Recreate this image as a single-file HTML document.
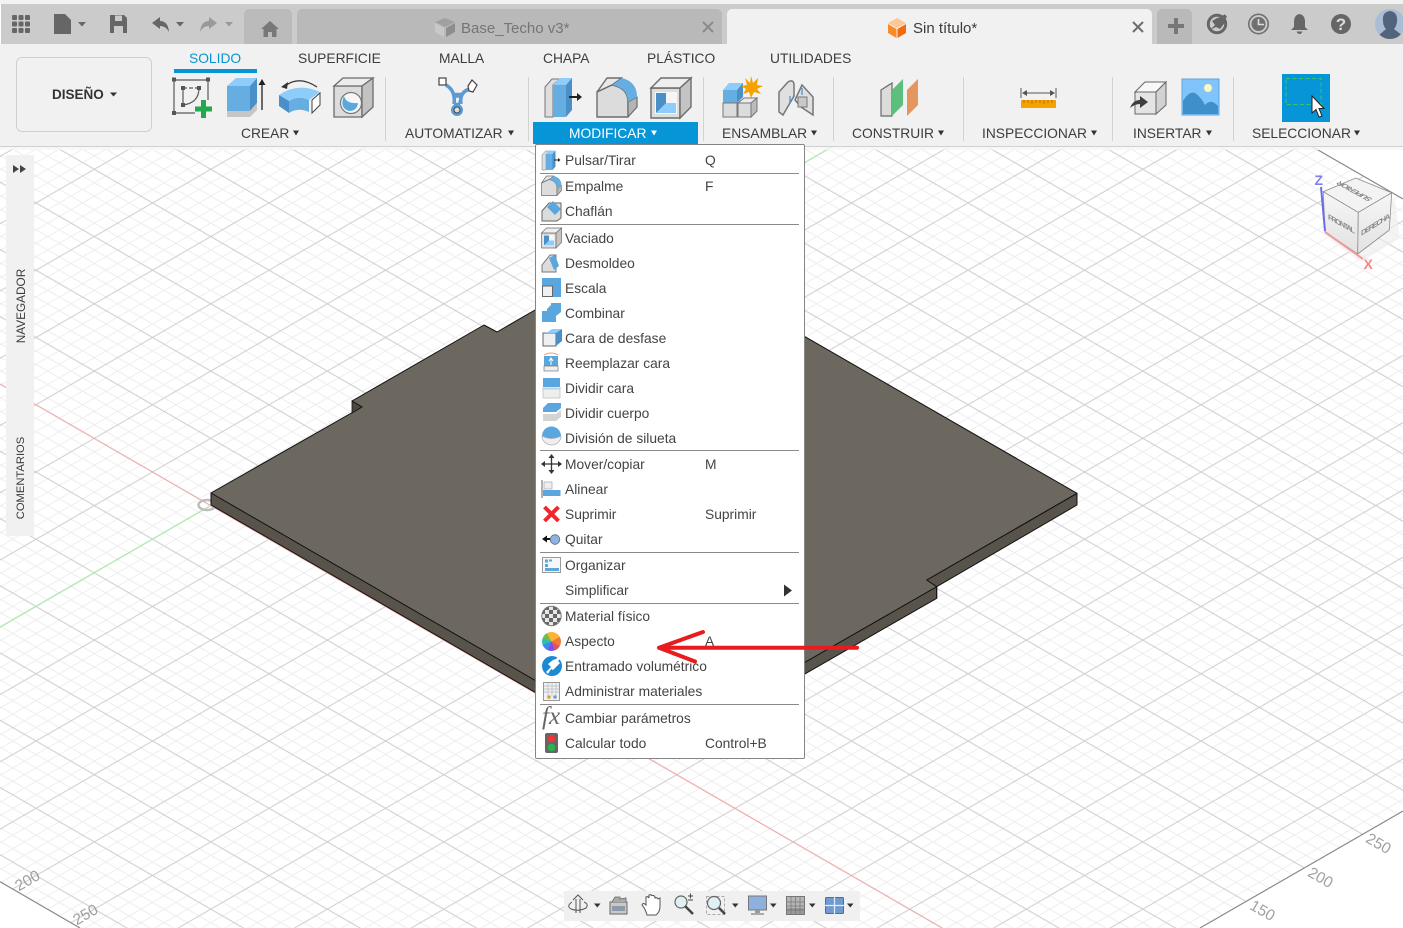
<!DOCTYPE html>
<html><head><meta charset="utf-8"><title>Fusion</title>
<style>
html,body{margin:0;padding:0;background:#fff;width:1403px;height:928px;overflow:hidden}
body{position:relative;font-family:"Liberation Sans",sans-serif;font-size:13.8px;color:#3c3c3c}
.a{position:absolute}
.t{position:absolute;white-space:nowrap;line-height:22px;height:20px}
svg.full{position:absolute;left:0;top:0;width:1403px;height:928px}
.m{position:absolute;left:565px;white-space:nowrap;line-height:22px;height:20px;color:#444}
.k{position:absolute;left:705px;white-space:nowrap;line-height:22px;height:20px;color:#444}
.s{position:absolute;left:540px;width:259px;height:1px;background:#8a8a8a}
.sep{position:absolute;top:77px;width:1px;height:64px;background:#d2d2d2}
</style></head><body>

<svg class="full" viewBox="0 0 1403 928">
<defs>
<pattern id="g" patternUnits="userSpaceOnUse" width="100" height="100" patternTransform="matrix(.5825,.3363,.5825,-.3363,94.3,169.3)">
<g stroke="#eeeeee" stroke-width="1.7" fill="none">
<path d="M20 0V100M40 0V100M60 0V100M80 0V100M0 20H100M0 40H100M0 60H100M0 80H100"/></g>
<path d="M0 0H100M0 100H100M0 0V100M100 0V100" stroke="#cfcfcf" stroke-width="1.8" fill="none"/>
</pattern>
<linearGradient id="cf" x1="0" y1="0" x2="0" y2="1"><stop offset="0" stop-color="#f6f6f6"/><stop offset="1" stop-color="#e2e2e2"/></linearGradient>
</defs>
<rect width="1403" height="928" fill="#fff"/>
<polygon points="0,0 1058,0 1403,199 1403,811 1200,928 80,928 0,881.7" fill="url(#g)"/>
<path d="M0 881.7L80 928M1200 928L1403 811M1403 199L1058 0" fill="none" stroke="#8a8a8a" stroke-width="1.2"/>
<g font-size="15.5" fill="#a0a0a0" text-anchor="middle">
<text transform="translate(1376,848) rotate(30)">250</text>
<text transform="translate(1318,882) rotate(30)">200</text>
<text transform="translate(1260,915) rotate(30)">150</text>
<text transform="translate(30,885) rotate(-30)">200</text>
<text transform="translate(88,919) rotate(-30)">250</text>
</g>
<path d="M0 384L942 928" stroke="#f6a8a8" stroke-width="1" fill="none"/>
<path d="M0 627L1086 0" stroke="#a4f0a4" stroke-width="1" fill="none"/>
<ellipse cx="207" cy="505" rx="8.5" ry="5" fill="none" stroke="#bdbdbd" stroke-width="2.5"/>
<!-- plate -->
<polygon points="211,493 211,505 640,753 700,734 806,673.3 936.7,598.3 936.7,586.7 1077,505 1077,493.3 926.7,580" fill="#58544b" stroke="#111" stroke-width="1" stroke-linejoin="round"/>
<polygon points="211,493 362,407 352,401 484,325 497,332 535,310 650,300 805,336.7 1077,493.3 926.7,580 936.7,586.7 806,661.7 700,722 640,741" fill="#6c685f" stroke="#111" stroke-width="1" stroke-linejoin="round"/>
<polygon points="352,401 362,407 352,413" fill="#4c483f" stroke="#111" stroke-width=".8"/>
<path d="M936.7 586.7V598.3M1077 493.3V505" stroke="#111" stroke-width="1"/>
<!-- view cube -->
<polygon points="1330,240 1361,262 1400,238 1395,200" fill="#ededed" opacity=".6"/>
<polygon points="1323.3,191.7 1358.3,212.3 1357.7,254 1325,231.7" fill="url(#cf)" stroke="#8d8d8d" stroke-width=".8"/>
<polygon points="1358.3,212.3 1391.7,192.7 1389.3,230 1357.7,254" fill="url(#cf)" stroke="#8d8d8d" stroke-width=".8"/>
<polygon points="1355.7,178 1391.7,192.7 1358.3,212.3 1323.3,191.7" fill="#f3f3f3" stroke="#8d8d8d" stroke-width=".8"/>
<g font-size="7.5" fill="#8c8c8c" font-weight="bold">
<text transform="matrix(1,.55,0,1,1328,219)" textLength="27">FRONTAL</text>
<text transform="matrix(1,-.62,0,1,1361,236)" textLength="29">DERECHA</text>
<text transform="matrix(-1,-.55,.9,-.5,1373,199)" textLength="33">SUPERIOR</text>
</g>
<path d="M1321 187L1325 231" stroke="#6b6bee" stroke-width="2" fill="none"/>
<path d="M1325 232L1363 259" stroke="#f29a9a" stroke-width="2" fill="none"/>
<text x="1314.5" y="185" font-size="14" font-weight="bold" fill="#8080f0">Z</text>
<text x="1363.5" y="269" font-size="14" font-weight="bold" fill="#f08888">X</text>
</svg>

<!-- left panel -->
<div class="a" style="left:6px;top:155px;width:28px;height:381px;background:#f1f1f1"></div>
<div class="t" style="left:21px;top:296px;font-size:11.8px;line-height:20px;transform:translate(-50%,0) rotate(-90deg);color:#3c3c3c">NAVEGADOR</div>
<div class="t" style="left:21px;top:468px;font-size:11.2px;line-height:20px;transform:translate(-50%,0) rotate(-90deg);color:#3c3c3c">COMENTARIOS</div>

<!-- bottom toolbar -->
<div class="a" style="left:564px;top:891px;width:296px;height:30px;background:#f0f0f0"></div>

<!-- top bars -->
<div class="a" style="left:0;top:0;width:1403px;height:4px;background:#f2f2f2"></div>
<div class="a" style="left:1px;top:4px;width:1402px;height:40px;background:#cbcbcb"></div>
<div class="a" style="left:0;top:4px;width:1px;height:40px;background:#fff"></div>
<div class="a" style="left:244px;top:9px;width:48px;height:35px;background:#bbb;border-radius:5px 5px 0 0"></div>
<div class="a" style="left:297px;top:9px;width:425px;height:35px;background:#b9b9b9;border-radius:5px 5px 0 0"></div>
<div class="a" style="left:727px;top:9px;width:425px;height:35px;background:#f1f1f1;border-radius:5px 5px 0 0"></div>
<div class="a" style="left:1157px;top:9px;width:35px;height:35px;background:#b9b9b9;border-radius:5px 5px 0 0"></div>
<div class="a" style="left:0;top:44px;width:1403px;height:102px;background:#f1f1f1"></div>
<div class="a" style="left:0;top:146px;width:1403px;height:1px;background:#d0d0d0"></div>
<div class="a" style="left:0;top:147px;width:1403px;height:3px;background:#f6f6f6;opacity:.8"></div>
<div class="t" style="left:461px;top:18px;font-size:15px;color:#757575">Base_Techo v3*</div>
<div class="t" style="left:913px;top:18px;font-size:15px;color:#3c3c3c">Sin título*</div>

<!-- design box -->
<div class="a" style="left:16px;top:57px;width:134px;height:73px;border:1.5px solid #d0d0d0;border-radius:6px"></div>
<div class="t" style="left:52px;top:84px;font-size:13.5px;font-weight:bold;color:#333">DISEÑO</div>

<!-- tabs -->
<div class="t" style="left:189px;top:48px;color:#0696d7">SOLIDO</div>
<div class="a" style="left:174px;top:69px;width:83px;height:4px;background:#0696d7"></div>
<div class="t" style="left:298px;top:48px">SUPERFICIE</div>
<div class="t" style="left:439px;top:48px">MALLA</div>
<div class="t" style="left:543px;top:48px">CHAPA</div>
<div class="t" style="left:647px;top:48px">PLÁSTICO</div>
<div class="t" style="left:770px;top:48px">UTILIDADES</div>

<!-- separators -->
<div class="sep" style="left:385px"></div><div class="sep" style="left:528px"></div><div class="sep" style="left:703px"></div><div class="sep" style="left:833px"></div><div class="sep" style="left:963px"></div><div class="sep" style="left:1112px"></div><div class="sep" style="left:1233px"></div>

<!-- ribbon labels -->
<div class="a" style="left:533px;top:122px;width:165px;height:22px;background:#0696d7"></div>
<div class="t" style="left:241px;top:123px">CREAR</div>
<div class="t" style="left:405px;top:123px">AUTOMATIZAR</div>
<div class="t" style="left:569px;top:123px;color:#fff">MODIFICAR</div>
<div class="t" style="left:722px;top:123px">ENSAMBLAR</div>
<div class="t" style="left:852px;top:123px">CONSTRUIR</div>
<div class="t" style="left:982px;top:123px">INSPECCIONAR</div>
<div class="t" style="left:1133px;top:123px">INSERTAR</div>
<div class="t" style="left:1252px;top:123px">SELECCIONAR</div>

<!-- menu -->
<div class="a" style="left:535px;top:144px;width:268px;height:613px;background:#fff;border:1px solid #858585;border-radius:2px"></div>
<div class="s" style="top:173px"></div><div class="s" style="top:224px"></div><div class="s" style="top:450px"></div><div class="s" style="top:552px"></div><div class="s" style="top:603px"></div><div class="s" style="top:704px"></div>
<div class="m" style="top:150px">Pulsar/Tirar</div><div class="k" style="top:150px">Q</div>
<div class="m" style="top:176px">Empalme</div><div class="k" style="top:176px">F</div>
<div class="m" style="top:201px">Chaflán</div>
<div class="m" style="top:228px">Vaciado</div>
<div class="m" style="top:253px">Desmoldeo</div>
<div class="m" style="top:278px">Escala</div>
<div class="m" style="top:303px">Combinar</div>
<div class="m" style="top:328px">Cara de desfase</div>
<div class="m" style="top:353px">Reemplazar cara</div>
<div class="m" style="top:378px">Dividir cara</div>
<div class="m" style="top:403px">Dividir cuerpo</div>
<div class="m" style="top:428px">División de silueta</div>
<div class="m" style="top:454px">Mover/copiar</div><div class="k" style="top:454px">M</div>
<div class="m" style="top:479px">Alinear</div>
<div class="m" style="top:504px">Suprimir</div><div class="k" style="top:504px">Suprimir</div>
<div class="m" style="top:529px">Quitar</div>
<div class="m" style="top:555px">Organizar</div>
<div class="m" style="top:580px">Simplificar</div>
<div class="m" style="top:606px">Material físico</div>
<div class="m" style="top:631px">Aspecto</div><div class="k" style="top:631px">A</div>
<div class="m" style="top:656px">Entramado volumétrico</div>
<div class="m" style="top:681px">Administrar materiales</div>
<div class="m" style="top:708px">Cambiar parámetros</div>
<div class="m" style="top:733px">Calcular todo</div><div class="k" style="top:733px">Control+B</div>
<div class="a" style="left:542px;top:632px;width:19px;height:19px;border-radius:50%;background:conic-gradient(#ffb233 0 60deg,#ee7a3e 60deg 120deg,#dd5560 120deg 160deg,#7a4ff0 160deg 205deg,#3a8ee6 205deg 250deg,#2cc0b0 250deg 290deg,#6cc04a 290deg 330deg,#ffb233 330deg)"></div>

<svg class="full" viewBox="0 0 1403 928">
<defs>
<g id="pp">
<polygon points="545,87 552,79 560,79 553,85 553,117 545,117" fill="#dedede" stroke="#777"/>
<polygon points="553,85 566,85 566,117 553,117" fill="#66ade2"/>
<polygon points="553,85 560,78 572,78 566,85" fill="#8ecdfb"/>
<polygon points="566,85 572,78 572,110 566,117" fill="#4a8fc7"/>
<path d="M569 97H578" stroke="#222" stroke-width="2"/><path d="M577 93L582 97L577 101Z" fill="#222"/>
</g>
<g id="fl">
<path d="M597 92L607 78H622L612 85Z" fill="#e8e8e8" stroke="#6c6c6c" stroke-width="1.4" stroke-linejoin="round"/>
<path d="M597 92L612 85Q628 88 628 102V117H597Z" fill="#dcdcdc" stroke="#6c6c6c" stroke-width="1.4" stroke-linejoin="round"/>
<path d="M628 102L637 97V107L628 117Z" fill="#b5b5b5" stroke="#6c6c6c" stroke-width="1.2" stroke-linejoin="round"/>
<path d="M612 85L622 78Q637 82 637 97L628 102Q628 88 612 85Z" fill="#66ade2"/>
</g>
<g id="sh">
<polygon points="651,88 680,88 680,118 651,118" fill="#dedede" stroke="#6c6c6c" stroke-width="1.4"/>
<polygon points="651,88 661,78 691,78 680,88" fill="#eeeeee" stroke="#6c6c6c" stroke-width="1.4"/>
<polygon points="680,88 691,78 691,107 680,118" fill="#c4c4c4" stroke="#6c6c6c" stroke-width="1.4"/>
<rect x="655" y="92" width="22" height="22" fill="#f6f6f6"/>
<polygon points="656,93 666,93 666,105 656,113" fill="#4a8fc7"/>
<polygon points="666,103 676,103 676,113 656,113" fill="#8ecdfb"/>
</g>
</defs>

<!-- top bar icons -->
<g fill="#666">
<rect x="12" y="15" width="5" height="5" rx="1"/><rect x="18.5" y="15" width="5" height="5" rx="1"/><rect x="25" y="15" width="5" height="5" rx="1"/>
<rect x="12" y="21.5" width="5" height="5" rx="1"/><rect x="18.5" y="21.5" width="5" height="5" rx="1"/><rect x="25" y="21.5" width="5" height="5" rx="1"/>
<rect x="12" y="28" width="5" height="5" rx="1"/><rect x="18.5" y="28" width="5" height="5" rx="1"/><rect x="25" y="28" width="5" height="5" rx="1"/>
<path d="M54 14H65L71 20V34H54Z"/>
<path d="M78 22H86L82 26.5ZM176 22H184L180 26.5Z"/>
<path fill-rule="evenodd" d="M110 15H124L127 18V33H110ZM115 15.5V21H122V15.5ZM114 26V33H123V26Z"/>
<path d="M152 23L160 17V21Q168 21 169 32Q166 26 160 26V29Z"/>
</g>
<path d="M217 23L209 17V21Q201 21 200 32Q203 26 209 26V29Z" fill="#999"/>
<path d="M225 22H233L229 26.5Z" fill="#999"/>
<path d="M270 21L279 29H276.5V37H272V32H268V37H263.5V29H261Z" fill="#787878"/>
<polygon points="435,22 445,18 455,22 445,27" fill="#a0a0a0"/><polygon points="435,23 444,28 444,37 435,32" fill="#c8c8c8"/><polygon points="446,28 455,23 455,32 446,37" fill="#8e8e8e"/>
<path d="M703 22L713 32M713 22L703 32" stroke="#8a8a8a" stroke-width="2"/>
<path d="M1133 22L1143 32M1143 22L1133 32" stroke="#6d6d6d" stroke-width="2"/>
<polygon points="888,23 897,18 906,23 897,28" fill="#ffc792"/><polygon points="888,24 896.5,29 896.5,38 888,33" fill="#f98a25"/><polygon points="897.5,29 906,24 906,33 897.5,38" fill="#f26b0f"/>
<path d="M1176 18V34M1168 26H1184" stroke="#777" stroke-width="4"/>
<circle cx="1217" cy="24" r="8.7" fill="none" stroke="#666" stroke-width="3"/>
<path d="M1210 30L1215 25L1212 21L1217 18L1221 17L1225 14L1227 17L1224 20L1226 22L1223 25L1220 29L1216 27Z" fill="#666"/>
<path d="M1222 12L1229 18L1231 12Z" fill="#cbcbcb"/>
<circle cx="1258.5" cy="24" r="9.7" fill="none" stroke="#707070" stroke-width="1.6"/><circle cx="1258.5" cy="24" r="7" fill="#707070"/>
<path d="M1258.5 19V24.5H1264" stroke="#ddd" stroke-width="1.6" fill="none"/>
<path d="M1299.5 14Q1305 15 1305 22V27L1308 30H1291L1294 27V22Q1294 15 1299.5 14ZM1296.5 31.500H1302.500Q1301.500 34 1299.500 34Q1297.500 34 1296.500 31.500Z" fill="#666"/>
<circle cx="1341" cy="24" r="10" fill="#666"/>
<text x="1341" y="30" text-anchor="middle" font-size="17" font-weight="bold" fill="#ddd">?</text>
<clipPath id="av"><circle cx="1390" cy="24" r="15"/></clipPath>
<g clip-path="url(#av)"><rect x="1375" y="9" width="28" height="30" fill="#a9bdd6"/>
<path d="M1390 11Q1398 12 1397 22Q1396 27 1394 29L1403 36V39H1378V36L1386 29Q1383 26 1383 21Q1382 12 1390 11Z" fill="#52647c"/></g>

<!-- ribbon carets -->
<g fill="#333">
<path d="M110 92.500H117L113.500 96.500ZM293 130.500H299L296 135.500ZM508 130.500H514L511 135.500ZM811 130.500H817L814 135.500ZM938 130.500H944L941 135.500ZM1091 130.500H1097L1094 135.500ZM1206 130.500H1212L1209 135.500ZM1354 130.500H1360L1357 135.500Z"/>
</g>
<path d="M651 130.500H657L654 135.500Z" fill="#fff"/>

<!-- create sketch -->
<g fill="none" stroke="#5a5a5a" stroke-width="1.2"><path d="M174 80H208M174 80V113H195M208 79V100"/><path d="M183 88H199" stroke-dasharray="4 2"/><path d="M183 88V105M183 105Q199 103 199 88"/></g>
<g fill="#555"><rect x="172" y="77.500" width="4" height="4"/><rect x="206" y="77.500" width="4" height="4"/><rect x="172" y="111" width="4" height="4"/><rect x="181" y="86" width="4" height="4"/><rect x="197" y="86" width="4" height="4"/><rect x="181" y="103" width="4" height="4"/></g>
<path d="M203.500 100V118M195 109H212" stroke="#22a84f" stroke-width="5"/>
<!-- extrude -->
<polygon points="227,86 250,86 250,111 227,111" fill="#66ade2"/><polygon points="227,86 236,78 257,78 250,86" fill="#8ecdfb"/><polygon points="250,86 257,78 257,103 250,111" fill="#4a8fc7"/>
<polygon points="227,111 250,111 257,103 257,110 250,117 227,117" fill="#c6c6c6"/>
<path d="M262 110V83" stroke="#222" stroke-width="1.3"/><path d="M258.500 85L262 79L265.500 85Z" fill="#222"/>
<!-- revolve -->
<path d="M317 87Q299 75 285 86" fill="none" stroke="#333" stroke-width="1.3"/><path d="M281 87L288 82L287 89Z" fill="#333"/>
<path d="M279 95Q298 82 320 92L309 100Q298 95 289 101Z" fill="#8ecdfb"/>
<path d="M279 95L289 101V113L279 106Z" fill="#4a8fc7"/>
<path d="M289 101Q298 95 309 100V112Q298 107 289 113Z" fill="#66ade2"/>
<polygon points="312,100 320,93 320,105 312,113" fill="#fff" stroke="#444" stroke-width="1"/>
<!-- hole -->
<polygon points="334,86 362,86 362,117 334,117" fill="#dcdcdc" stroke="#6c6c6c" stroke-width="1.3"/><polygon points="334,86 343,78 373,78 362,86" fill="#ececec" stroke="#6c6c6c" stroke-width="1.3"/><polygon points="362,86 373,78 373,107 362,117" fill="#c2c2c2" stroke="#6c6c6c" stroke-width="1.3"/>
<circle cx="351" cy="103" r="10.500" fill="#f6f6f6" stroke="#777" stroke-width="1.2"/>
<path d="M344 96Q346 104 358 103Q357 111 349 111Q339 108 344 96Z" fill="#5aa6de"/>
<!-- automate -->
<path d="M446 85Q456 91 454 104M470 89Q459 92 461 104M455 96H460" stroke="#5b9bd3" stroke-width="3.5" fill="none"/>
<path d="M453 94L462 94L459 104H455Z" fill="none" stroke="#5b9bd3" stroke-width="2.5"/>
<rect x="439" y="78" width="7" height="7" fill="#fff" stroke="#444" stroke-width="1.2"/>
<polygon points="468,86 472,80 477,85 473,92 469,91" fill="#fff" stroke="#444" stroke-width="1.2"/>
<circle cx="457" cy="110" r="6" fill="#5b9bd3"/><circle cx="457" cy="110" r="3" fill="#ddd" stroke="#444"/>
<!-- modify -->
<use href="#pp"/><use href="#fl"/><use href="#sh"/>
<!-- assemble -->
<polygon points="723,90 737,90 737,103 723,103" fill="#66ade2"/><polygon points="723,90 729,83 743,83 737,90" fill="#8ecdfb"/><polygon points="737,90 743,83 743,97 737,103" fill="#4a8fc7"/>
<rect x="723" y="103" width="14" height="14" fill="#dcdcdc" stroke="#777"/><polygon points="738,103 751,103 751,117 738,117" fill="#dcdcdc" stroke="#777"/><polygon points="738,103 744,98 757,98 751,103" fill="#ececec" stroke="#777"/><polygon points="751,103 757,98 757,111 751,117" fill="#bbb" stroke="#777"/>
<polygon points="751,76 753,83 758,78 757,85 763,86 757,89 761,94 754,92 751,98 749,92 743,94 746,89 741,86 747,85 745,78 750,83" fill="#f5a100"/>
<!-- joint -->
<path d="M779 112V92L788 82Q793 79 794 84V96L783 115Z" fill="#e0e0e0" stroke="#777" stroke-width="1.5"/>
<path d="M795 100L802 85L813 97V115L801 107Z" fill="#e0e0e0" stroke="#777" stroke-width="1.5"/>
<rect x="798" y="97" width="9" height="10" fill="#c9c9c9" stroke="#777"/>
<path d="M790 96V103M802 88V95" stroke="#3a90d8" stroke-width="1.2"/>
<!-- construct -->
<polygon points="881,90 892,83 892,116 881,116" fill="#dcdcdc" stroke="#6a6a6a" stroke-width="1.2"/>
<polygon points="892,90 903,79 903,105 892,116" fill="#5cbf7d"/>
<polygon points="907,90 918,79 918,105 907,116" fill="#e3965e"/>
<!-- inspect -->
<path d="M1021 88V98M1056 88V98" stroke="#555" stroke-width="1"/><path d="M1024 93H1053" stroke="#555" stroke-width="1"/><path d="M1022 93L1027 90V96ZM1055 93L1050 90V96Z" fill="#555"/>
<rect x="1021" y="100" width="35" height="8" fill="#f5a100"/>
<path d="M1024 100V103M1028 100V103M1032 100V104M1036 100V103M1040 100V103M1044 100V104M1048 100V103M1052 100V103" stroke="#a06b00" stroke-width=".8"/>
<!-- insert -->
<polygon points="1135,92 1156,92 1156,114 1135,114" fill="#e4e4e4" stroke="#666"/><polygon points="1135,92 1145,82 1166,82 1156,92" fill="#f8f8f8" stroke="#666"/><polygon points="1156,92 1166,82 1166,105 1156,114" fill="#d2d2d2" stroke="#666"/>
<path d="M1130 108Q1133 100 1140 100V96L1148 102L1140 108V104Q1135 104 1130 108Z" fill="#3e3e3e"/>
<rect x="1182" y="79" width="37" height="36" fill="#80c4fb" stroke="#5da6e0"/>
<path d="M1183 114V101Q1189 91 1195 93Q1201 97 1205 105Q1211 98 1218 106V114Z" fill="#3f8fcb"/><circle cx="1208" cy="88" r="4" fill="#fdf6c0"/>
<!-- select -->
<rect x="1282" y="74" width="48" height="48" fill="#0696d7"/>
<rect x="1286" y="78.500" width="35" height="26" fill="none" stroke="#38c56e" stroke-width="1" stroke-dasharray="4 2.500"/>
<path d="M1312 96V113L1316 109.500L1319 117L1322 116L1319 108.500H1324Z" fill="#fff" stroke="#222" stroke-width="1"/>

<!-- menu icons -->
<use href="#pp" transform="translate(269.500,111.500) scale(.5)"/>
<use href="#fl" transform="translate(243,137) scale(.5)"/>
<polygon points="542,211 549,203 561,203 561,218 557,221 542,221" fill="#dcdcdc" stroke="#666"/><polygon points="547,207 553,201 561,209 555,215" fill="#5aa6de"/>
<use href="#sh" transform="translate(216,189) scale(.5)"/>
<polygon points="542,265 550,255 556,255 556,272 542,272" fill="#dcdcdc" stroke="#777"/><polygon points="549,258 555,255 559,266 554,270" fill="#5aa6de"/>
<rect x="542" y="278" width="19" height="19" fill="#5aa6de"/><rect x="542.500" y="286" width="10" height="10.500" fill="#f0f0f0" stroke="#666"/>
<path d="M547 309L551 305V303H561V312L556 316V322H542V311H547Z" fill="#5aa6de"/>
<rect x="543" y="333" width="13" height="13" fill="#f0f0f0" stroke="#666"/><polygon points="546,333 552,329 562,329 556,333" fill="#8ecdfb"/><polygon points="556,333 562,329 562,341 556,346" fill="#4a8fc7"/>
<path d="M544 355Q551 351 558 355" stroke="#f0a070" fill="none"/><rect x="544" y="356" width="14" height="10" fill="#5aa6de"/><rect x="544" y="366" width="14" height="5" fill="#eee" stroke="#777" stroke-width=".7"/><path d="M551 365V359M549 361L551 358L553 361" stroke="#fff" fill="none"/>
<rect x="543" y="378" width="17" height="9" fill="#5aa6de"/><rect x="543" y="389" width="17" height="9" fill="#eee" stroke="#bbb" stroke-width=".7"/><path d="M542 388H561" stroke="#a8d4f5"/>
<polygon points="543,408 548,403 561,403 561,408 556,412 543,412" fill="#5aa6de"/><path d="M542 413H556L561 409" stroke="#fff" fill="none"/><polygon points="543,414 556,414 561,410 561,417 556,421 543,421" fill="#d4d4d4"/>
<path d="M542 436A9.500 9.500 0 0 1 561 436Q551.500 441 542 436Z" fill="#5aa6de"/><path d="M542 436Q551.500 441 561 436A9.500 9 0 0 1 542 436Z" fill="#eee" stroke="#aaa" stroke-width=".7"/>
<path d="M551.500 456V472M543 464H560" stroke="#333" stroke-width="1.3"/><path d="M551.500 454L548.500 458H554.500ZM551.500 474L548.500 470H554.500ZM541 464L545 461V467ZM562 464L558 461V467Z" fill="#333"/>
<path d="M542 480V498" stroke="#666"/><rect x="544" y="482" width="8" height="7" fill="#eee" stroke="#aaa" stroke-width=".7"/><rect x="543" y="490" width="17.500" height="6" fill="#5aa6de"/>
<path d="M544.500 507L558.500 521M558.500 507L544.500 521" stroke="#f0262c" stroke-width="4"/>
<path d="M542 539L547 535.500V542.500Z" fill="#111"/><path d="M546 539H551" stroke="#111" stroke-width="2"/><circle cx="555" cy="539.500" r="4.800" fill="#8fb3e0" stroke="#667" stroke-width=".8"/>
<rect x="542.500" y="557.500" width="18" height="15" fill="#f4f8fb" stroke="#9a9a9a"/><rect x="545" y="559.500" width="3" height="3" fill="#5aa6de"/><rect x="549" y="559.500" width="3" height="2" fill="#5aa6de"/><rect x="545" y="564" width="3" height="3" fill="#5aa6de"/><rect x="545" y="568" width="14" height="3" fill="#5aa6de"/>
<path d="M784 584.500L792 590.500L784 596.500Z" fill="#333"/>
<clipPath id="cs"><circle cx="551.500" cy="616" r="9.700"/></clipPath>
<g clip-path="url(#cs)"><rect x="541" y="606" width="21" height="21" fill="#e8e8e8"/>
<path d="M545 606h4v4h-4zM553 606h4v4h-4zM541 610h4v4h-4zM549 610h4v4h-4zM557 610h4v4h-4zM545 614h4v4h-4zM553 614h4v4h-4zM541 618h4v4h-4zM549 618h4v4h-4zM557 618h4v4h-4zM545 622h4v4h-4zM553 622h4v4h-4z" fill="#666"/></g>
<circle cx="551.500" cy="616" r="9.700" fill="none" stroke="#777"/>
<circle cx="552" cy="666" r="10" fill="#1a8ad4"/><path d="M546 672L551 667L548 664L553 660L556 659L559 656L561 658L558 661L560 663L556 667L553 670L551 669L548 674Z" fill="#fff"/>
<rect x="543.500" y="682.500" width="16" height="18" fill="#eef2f6" stroke="#999"/><path d="M544 686H559M544 689H559M544 692H559M548 683V696M552 683V696M556 683V696" stroke="#bbb" stroke-width=".7"/><circle cx="549" cy="697" r="1.800" fill="#e0a030"/><circle cx="555" cy="697" r="1.800" fill="#7a9cc0"/>
<text x="542" y="724" font-family="Liberation Serif, serif" font-style="italic" font-size="25" fill="#666">fx</text>
<rect x="545" y="733" width="13" height="20" rx="2" fill="#666"/><circle cx="551.500" cy="738.500" r="3.800" fill="#f0343a"/><circle cx="551.500" cy="747.500" r="3.800" fill="#2bb34f"/>

<!-- red arrow -->
<path d="M857 647.700H659M703 632L659 647.700L695 661.500" fill="none" stroke="#e81c1f" stroke-width="4" stroke-linecap="round" stroke-linejoin="round"/>

<!-- left panel arrows -->
<path d="M13 165L19 169L13 173ZM20 165L26 169L20 173Z" fill="#444"/>

<!-- bottom toolbar icons -->
<g fill="#333"><path d="M594 903.500H600.500L597.300 907.500ZM732 903.500H738.500L735.300 907.500ZM770 903.500H776.500L773.300 907.500ZM809 903.500H815.500L812.300 907.500ZM847 903.500H853.500L850.300 907.500Z"/></g>
<g fill="none" stroke="#555" stroke-width="1"><path d="M576 913V899M580 913V899M573 900L578 895L583 900"/><path d="M572 902Q566 906 571 909Q578 912 586 908Q589 904 584 902"/></g>
<rect x="610" y="902" width="17" height="12" fill="#c9c9c9" stroke="#666"/><rect x="612" y="906" width="13" height="5" fill="#8f9aa8"/><path d="M612 902L615 897H620V899L626 898V902" fill="#aaa" stroke="#666" stroke-width=".8"/>
<path d="M647 915Q645 908 642 905Q643 902 646 905V897Q648 896 649 898V895Q651 894 652 896V895.500Q654 895 655 897V898Q657 897 658 899L660 898V906Q660 912 656 915Z" fill="#fff" stroke="#555" stroke-width="1"/>
<circle cx="681" cy="902" r="6" fill="#dff0f3" stroke="#666" stroke-width="1.2"/><path d="M685 906L693 914" stroke="#444" stroke-width="2.500"/><path d="M688 896H693M690.500 893.500V898.500M688 900H693" stroke="#444" stroke-width=".9"/>
<rect x="706.500" y="896.500" width="18" height="18" fill="none" stroke="#aaa" stroke-width="1" stroke-dasharray="3 2"/>
<circle cx="714" cy="903" r="6.500" fill="#dff0f3" stroke="#666" stroke-width="1.2"/><path d="M719 908L725 914" stroke="#444" stroke-width="2.500"/>
<rect x="748.500" y="896" width="18" height="14" fill="#8fb0dc" stroke="#777"/><rect x="755" y="910" width="5" height="3" fill="#999"/><rect x="751" y="913" width="13" height="2" fill="#aaa"/>
<rect x="786.500" y="896.500" width="18" height="18" fill="#b5b5b5" stroke="#777"/><path d="M786 902H805M786 906H805M786 910H805M791 896V914M795.500 896V914M800 896V914" stroke="#777" stroke-width=".7"/><rect x="787" y="908" width="17" height="6" fill="#666" opacity=".35"/>
<rect x="825.500" y="897.500" width="18" height="16" rx="1" fill="#6f9bd0" stroke="#667"/><path d="M825 905.500H844M834.500 897V914" stroke="#e5eef8" stroke-width="1.200"/>
</svg>
</body></html>
